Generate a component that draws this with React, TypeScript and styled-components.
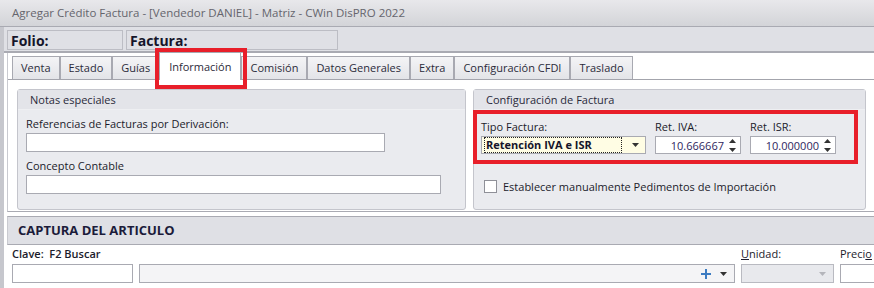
import React from 'react';
import styled, { createGlobalStyle, css } from 'styled-components';

const colors = {
  text: '#1b1b2b',
  border: '#a9aab2',
  softBorder: '#c4c5cc',
  panel: '#dfe0e5',
  group: '#eaebef',
  red: '#e81f2a',
};

const GlobalStyle = createGlobalStyle`
  body {
    margin: 0;
    background: #ffffff;
    font-family: "Open Sans", "Noto Sans", sans-serif;
    font-size: 11px;
    color: ${colors.text};
  }
`;

const tabs = [
  'Venta',
  'Estado',
  'Guías',
  'Información',
  'Comisión',
  'Datos Generales',
  'Extra',
  'Configuración CFDI',
  'Traslado',
];

const ArrowDown: React.FC<{ color?: string }> = ({ color = '#333' }) => (
  <svg width="7" height="4" viewBox="0 0 7 4">
    <path d="M0 0h7L3.5 4z" fill={color} />
  </svg>
);

const Spinner: React.FC = () => (
  <SpinBox>
    <svg width="7" height="13" viewBox="0 0 7 13">
      <path d="M3.5 0L7 4H0z" fill="#333" />
      <path d="M0 9h7l-3.5 4z" fill="#333" />
    </svg>
  </SpinBox>
);

const PlusIcon: React.FC = () => (
  <svg width="10" height="10" viewBox="0 0 10 10">
    <path d="M5 0v10M0 5h10" stroke="#3d7cc2" strokeWidth="2" />
  </svg>
);

const App: React.FC = () => {
  return (
    <>
      <GlobalStyle />
      <Window>
        <TitleBar>Agregar Crédito Factura - [Vendedor DANIEL] - Matriz - CWin DisPRO 2022</TitleBar>
        <Frame>
          <HeaderRow>
            <FieldBox width={116}>Folio:</FieldBox>
            <FieldBox width={212}>Factura:</FieldBox>
          </HeaderRow>

          <TabSection>
            <TabStrip>
              {tabs.map(tab => (
                <Tab key={tab} active={tab === 'Información'}>
                  {tab}
                  {tab === 'Información' && <TabMark />}
                </Tab>
              ))}
            </TabStrip>

            <TabPage>
              <GroupBox width={449}>
                <GroupTitle>Notas especiales</GroupTitle>
                <GroupBody>
                  <Label>Referencias de Facturas por Derivación:</Label>
                  <TextInput width={359} />
                  <Label style={{ marginTop: 6 }}>Concepto Contable</Label>
                  <TextInput width={415} />
                </GroupBody>
              </GroupBox>

              <GroupBox width={393}>
                <GroupTitle>Configuración de Factura</GroupTitle>
                <MarkedRow>
                  <Field>
                    <Label>Tipo Factura:</Label>
                    <Select>
                      <FocusText>Retención IVA e ISR</FocusText>
                      <ArrowDown />
                    </Select>
                  </Field>
                  <Field>
                    <Label>Ret. IVA:</Label>
                    <NumberInput>
                      <span>10.666667</span>
                      <Spinner />
                    </NumberInput>
                  </Field>
                  <Field>
                    <Label>Ret. ISR:</Label>
                    <NumberInput>
                      <span>10.000000</span>
                      <Spinner />
                    </NumberInput>
                  </Field>
                </MarkedRow>
                <CheckRow>
                  <CheckBox />
                  Establecer manualmente Pedimentos de Importación
                </CheckRow>
              </GroupBox>
            </TabPage>
          </TabSection>

          <Capture>
            <CaptureHeader>CAPTURA DEL ARTICULO</CaptureHeader>
            <CaptureBody>
              <CaptureField>
                <CaptureLabel bold>Clave:&nbsp; F2 Buscar</CaptureLabel>
                <TextInput width={121} />
              </CaptureField>
              <CaptureField>
                <CaptureLabel>&nbsp;</CaptureLabel>
                <LookupInput>
                  <PlusIcon />
                  <ArrowDown />
                </LookupInput>
              </CaptureField>
              <CaptureField>
                <CaptureLabel>
                  <u>U</u>nidad:
                </CaptureLabel>
                <DisabledSelect>
                  <ArrowDown color="#b4b5bb" />
                </DisabledSelect>
              </CaptureField>
              <CaptureField>
                <CaptureLabel>
                  Preci<u>o</u>
                </CaptureLabel>
                <TextInput width={60} />
              </CaptureField>
            </CaptureBody>
          </Capture>
        </Frame>
      </Window>
    </>
  );
};

const Window = styled.div`
  width: 874px;
  height: 288px;
  overflow: hidden;
  display: flex;
  flex-direction: column;
  background: #fff;
`;

const TitleBar = styled.div`
  height: 26px;
  line-height: 26px;
  padding-left: 12px;
  background: linear-gradient(#e8e8eb, #d3d4d8);
  border-bottom: 1px solid ${colors.border};
  color: #65656d;
  font-size: 11.5px;
`;

const Frame = styled.div`
  flex: 1;
  display: flex;
  flex-direction: column;
  border-left: 4px solid #c6c7cd;
`;

const HeaderRow = styled.div`
  display: flex;
  gap: 3px;
  height: 26px;
  padding: 3px 0 0 3px;
  box-sizing: border-box;
  background: ${colors.panel};
  border-bottom: 2px solid ${colors.border};
`;

const FieldBox = styled.div<{ width: number }>`
  width: ${p => p.width}px;
  height: 20px;
  box-sizing: border-box;
  border: 1px solid #bcbdc4;
  padding-left: 3px;
  font-size: 14px;
  font-weight: 700;
  line-height: 20px;
  color: #15152a;
  overflow: hidden;
`;

const TabSection = styled.div`
  margin-left: 3px;
  border-left: 1px solid #c9cad0;
  border-bottom: 1px solid ${colors.border};
`;

const TabStrip = styled.div`
  display: flex;
  align-items: flex-end;
  height: 26px;
  padding-left: 4px;
  border-bottom: 1px solid #a3a4ac;
`;

const Tab = styled.div<{ active?: boolean }>`
  position: relative;
  height: 23px;
  box-sizing: border-box;
  padding: 0 8px;
  border: 1px solid #a8a9b1;
  border-bottom: none;
  background: linear-gradient(#f4f4f6, #e3e4e8);
  line-height: 22px;
  color: #2b2b3a;
  white-space: nowrap;

  ${p =>
    p.active &&
    css`
      height: 28px;
      margin-bottom: -1px;
      padding: 0 9px;
      background: #fff;
      line-height: 27px;
      z-index: 1;
    `}
`;

const TabMark = styled.span`
  position: absolute;
  left: -5px;
  right: -7px;
  top: -5px;
  bottom: -9px;
  border: 4px solid ${colors.red};
  pointer-events: none;
`;

const TabPage = styled.div`
  display: flex;
  gap: 7px;
  padding: 9px 8px 1px 9px;
`;

const GroupBox = styled.div<{ width: number }>`
  width: ${p => p.width}px;
  height: 121px;
  box-sizing: border-box;
  border: 1px solid ${colors.softBorder};
  border-radius: 3px;
  background: ${colors.group};
`;

const GroupTitle = styled.div`
  height: 19px;
  line-height: 19px;
  padding-left: 12px;
  background: #e3e4e9;
  border-bottom: 1px solid #eeeff2;
  color: #2a2a3a;
`;

const GroupBody = styled.div`
  display: flex;
  flex-direction: column;
  align-items: flex-start;
  padding: 6px 8px;
`;

const Label = styled.div`
  line-height: 15px;
  margin-bottom: 2px;
  white-space: nowrap;
`;

const TextInput = styled.div<{ width: number }>`
  width: ${p => p.width}px;
  height: 19px;
  box-sizing: border-box;
  border: 1px solid ${colors.border};
  background: #fff;
`;

const MarkedRow = styled.div`
  display: flex;
  gap: 9px;
  height: 54px;
  box-sizing: border-box;
  margin: 0 7px 0 -1px;
  padding: 5px 4px 0 4px;
  border: 4px solid ${colors.red};
`;

const Field = styled.div`
  display: flex;
  flex-direction: column;
`;

const Select = styled.div`
  display: flex;
  align-items: center;
  gap: 10px;
  width: 165px;
  height: 18px;
  box-sizing: border-box;
  padding: 0 6px 0 2px;
  border: 1px solid ${colors.border};
  background: #fffde4;
`;

const FocusText = styled.span`
  flex: 1;
  line-height: 14px;
  padding-left: 1px;
  border: 1px dotted #222;
  font-weight: 700;
  color: #15152a;
`;

const NumberInput = styled.div`
  display: flex;
  align-items: center;
  justify-content: flex-end;
  gap: 5px;
  width: 86px;
  height: 18px;
  box-sizing: border-box;
  padding-right: 4px;
  border: 1px solid ${colors.border};
  background: #fff;
  color: #2e2660;
`;

const SpinBox = styled.span`
  display: flex;
`;

const CheckRow = styled.div`
  display: flex;
  align-items: center;
  gap: 6px;
  margin: 15px 0 0 10px;
`;

const CheckBox = styled.span`
  width: 13px;
  height: 13px;
  box-sizing: border-box;
  border: 1px solid #8f9098;
  background: #fff;
`;

const Capture = styled.div`
  margin-top: 4px;
`;

const CaptureHeader = styled.div`
  margin-left: 3px;
  height: 29px;
  box-sizing: border-box;
  padding-left: 10px;
  border-top: 1px solid ${colors.border};
  border-bottom: 1px solid ${colors.border};
  border-left: 1px solid #c9cad0;
  background: ${colors.panel};
  font-size: 13px;
  font-weight: 700;
  line-height: 27px;
  color: #1b1b3a;
`;

const CaptureBody = styled.div`
  display: flex;
  gap: 6px;
  padding: 1px 0 0 8px;
`;

const CaptureField = styled.div`
  display: flex;
  flex-direction: column;
`;

const CaptureLabel = styled.div<{ bold?: boolean }>`
  height: 16px;
  line-height: 16px;
  margin-bottom: 2px;
  font-weight: ${p => (p.bold ? 600 : 400)};
  white-space: nowrap;
`;

const LookupInput = styled.div`
  display: flex;
  align-items: center;
  justify-content: flex-end;
  gap: 9px;
  width: 596px;
  height: 19px;
  box-sizing: border-box;
  padding-right: 7px;
  border: 1px solid ${colors.border};
  background: #f4f4f6;
`;

const DisabledSelect = styled.div`
  display: flex;
  align-items: center;
  justify-content: flex-end;
  width: 93px;
  height: 19px;
  box-sizing: border-box;
  padding-right: 7px;
  border: 1px solid #b9bac1;
  background: #e8e9ed;
`;

export default App;
